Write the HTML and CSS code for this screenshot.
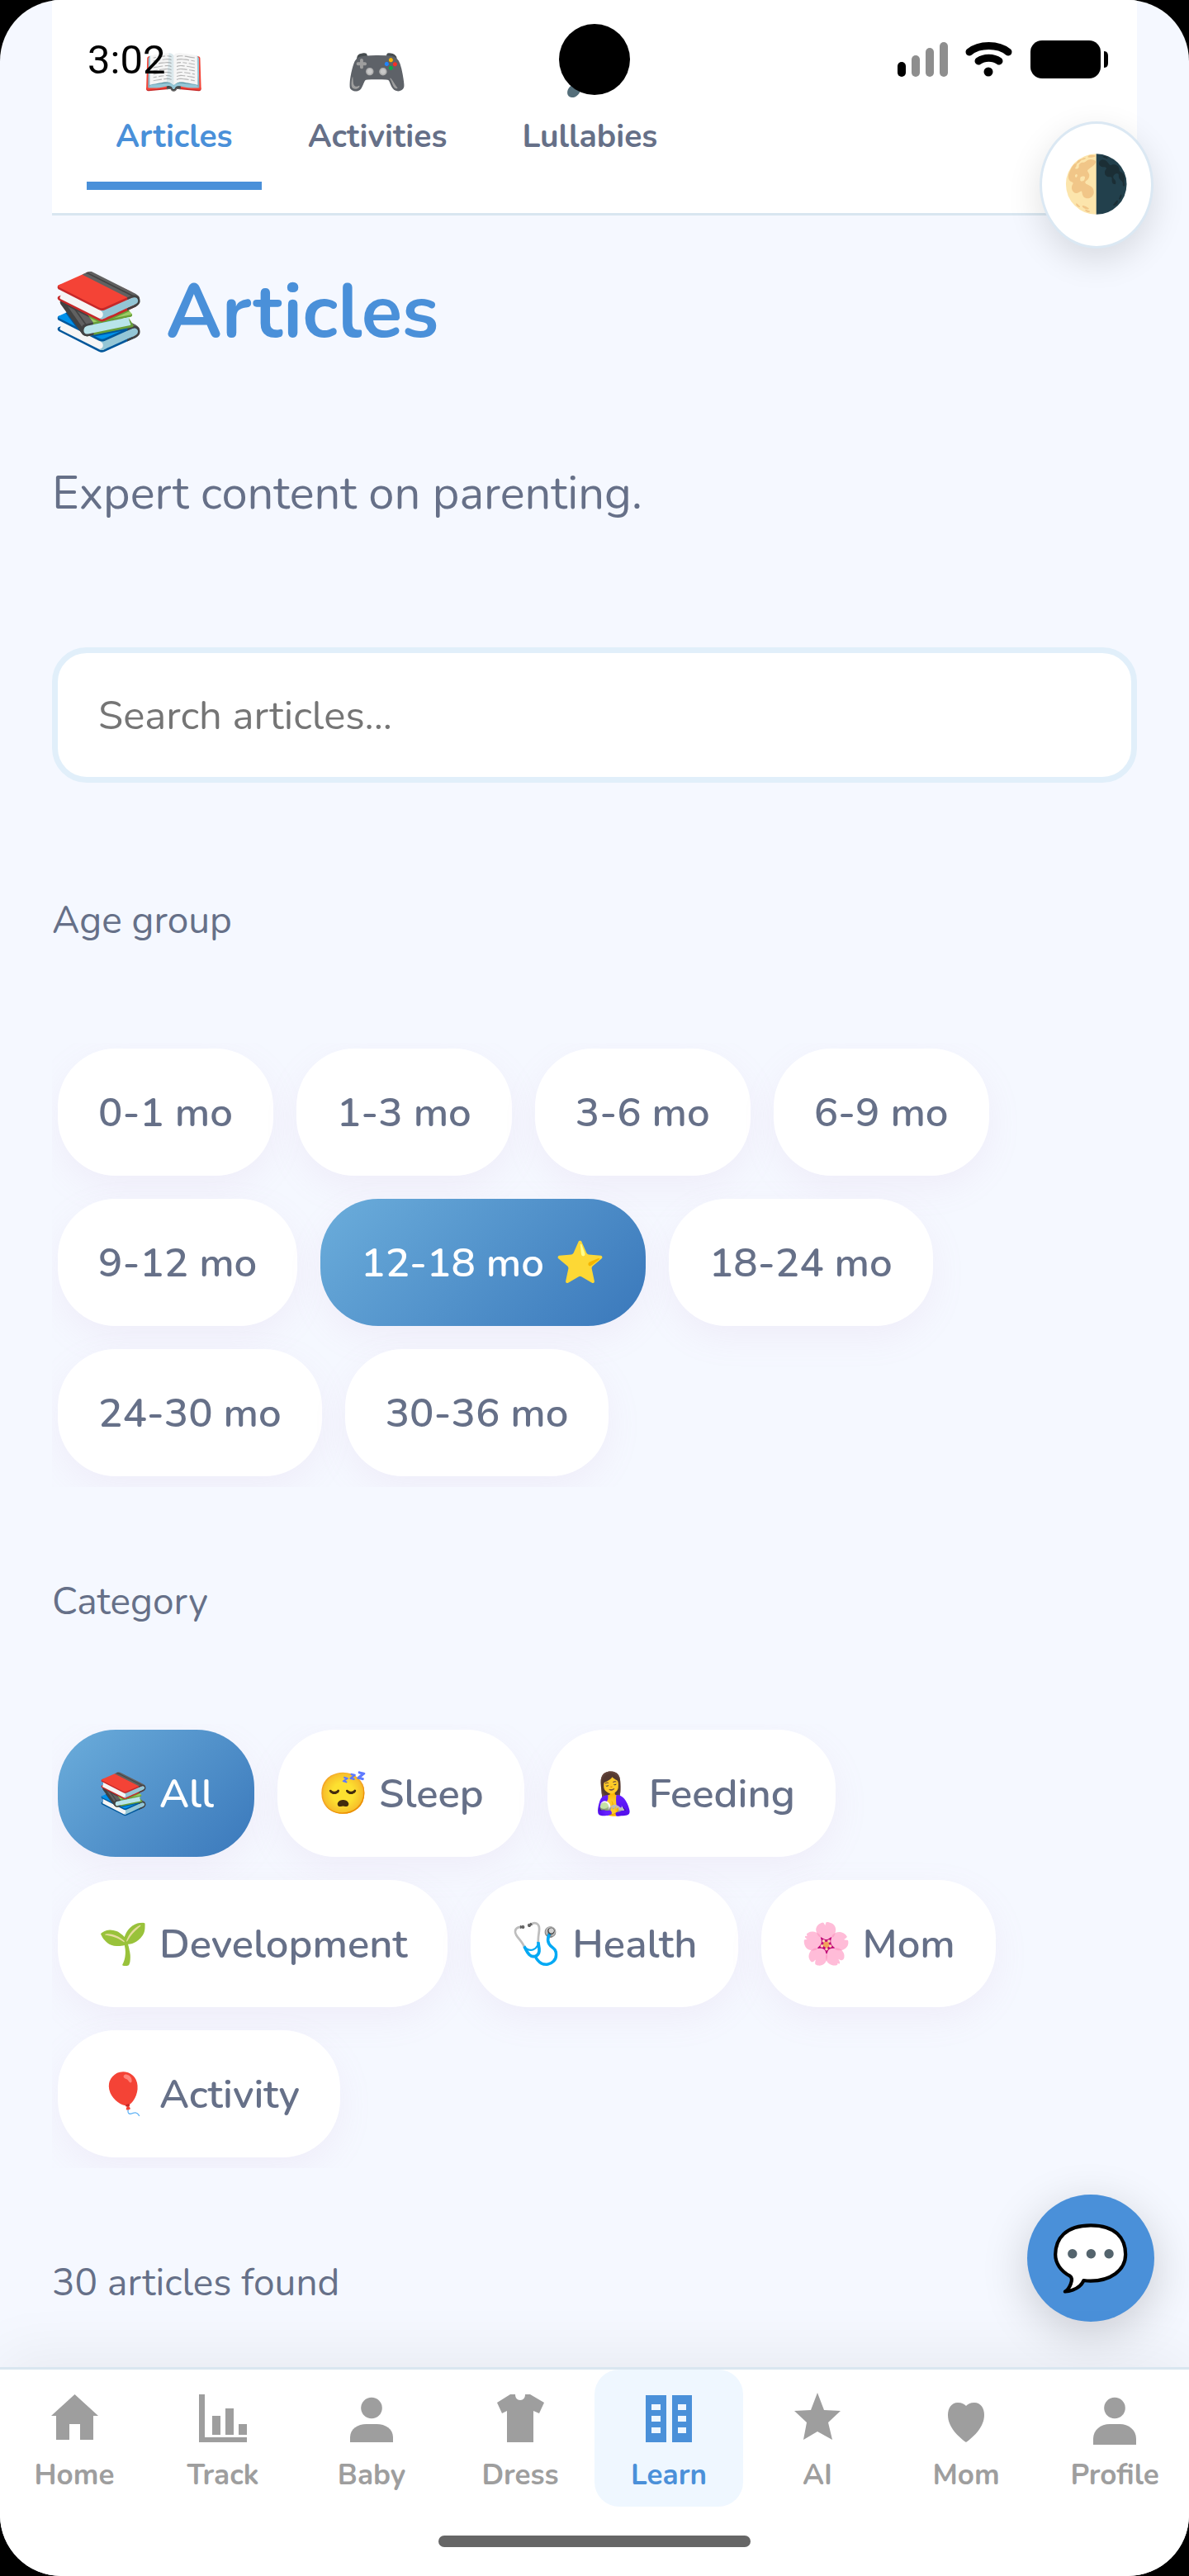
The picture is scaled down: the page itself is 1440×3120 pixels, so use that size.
FILE: index.html
```html
<!DOCTYPE html>
<html lang="en">
<head>
  <meta charset="UTF-8">
  <meta name="viewport" content="width=device-width, initial-scale=1.0">
  <title>Articles</title>
  <link rel="stylesheet" href="styles.css">
</head>
<body>
  <div class="screen">
    <div class="status-bar">
      <span class="time">3:02</span>
      <span class="camera"></span>
      <svg class="status-icons" width="256" height="46" viewBox="0 0 256 46" aria-hidden="true">
        <rect x="0" y="26" width="10" height="18" rx="5"/>
        <g fill="#8e8e8e">
          <rect x="17" y="18" width="10" height="26" rx="5"/>
          <rect x="34" y="9" width="10" height="35" rx="5"/>
          <rect x="51" y="2" width="10" height="42" rx="5"/>
        </g>
        <g fill="none" stroke="#000" stroke-linecap="round" stroke-width="9">
          <path d="M87 14C99 4 122 4 134 14"/>
          <path d="M98 25C105 20 116 20 123 25"/>
        </g>
        <circle cx="110" cy="38" r="5.5"/>
        <rect x="161" y="0" width="85" height="46" rx="14"/>
        <path d="M250 13c4 0 5 3 5 6v8c0 3-1 6-5 6z"/>
      </svg>
    </div>

    <button class="round-button theme-toggle" aria-label="Toggle theme">🌗</button>

    <main class="content">
      <div class="tabs">
        <button class="tab active"><span class="tab-icon">📖</span>Articles</button>
        <button class="tab"><span class="tab-icon">🎮</span>Activities</button>
        <button class="tab"><span class="tab-icon">🎵</span>Lullabies</button>
      </div>

      <h1>📚 Articles</h1>
      <p class="subtitle">Expert content on parenting.</p>

      <input type="text" class="search" placeholder="Search articles..." aria-label="Search articles">

      <p class="label">Age group</p>
      <div class="chips">
        <button class="chip">0-1 mo</button>
        <button class="chip">1-3 mo</button>
        <button class="chip">3-6 mo</button>
        <button class="chip">6-9 mo</button>
        <button class="chip">9-12 mo</button>
        <button class="chip active">12-18 mo ⭐</button>
        <button class="chip">18-24 mo</button>
        <button class="chip">24-30 mo</button>
        <button class="chip">30-36 mo</button>
      </div>

      <p class="label">Category</p>
      <div class="chips">
        <button class="chip active">📚 All</button>
        <button class="chip">😴 Sleep</button>
        <button class="chip">🤱 Feeding</button>
        <button class="chip">🌱 Development</button>
        <button class="chip">🩺 Health</button>
        <button class="chip">🌸 Mom</button>
        <button class="chip">🎈 Activity</button>
      </div>

      <p class="label">30 articles found</p>
    </main>

    <button class="round-button chat-button" aria-label="Open chat">💬</button>

    <nav class="bottom-nav">
      <div class="nav-items">
        <a href="#home" class="nav-item">
          <svg viewBox="0 0 64 64"><path d="M32.5 4L61 30h-6v29H39V40H26v19H10V30H4z"/></svg>
          Home
        </a>
        <a href="#track" class="nav-item">
          <svg viewBox="0 0 64 64"><path d="M3 4h7v52h51v6H3zM19 30h10v23H19zM35 21h10v32H35zM51 40h10v13H51z"/></svg>
          Track
        </a>
        <a href="#baby" class="nav-item">
          <svg viewBox="0 0 64 64"><circle cx="32" cy="20.5" r="12.8"/><path d="M6 62v-6c0-10 9-16 20-16h12c11 0 20 6 20 16v6z"/></svg>
          Baby
        </a>
        <a href="#dress" class="nav-item">
          <svg viewBox="0 0 64 64"><path d="M20 4h6c0 4 2 7 6 7s6-3 6-7h6l17 10-6 13-7-3v38H16V24l-6 3L4 14z"/></svg>
          Dress
        </a>
        <a href="#learn" class="nav-item active">
          <svg viewBox="0 0 64 64"><path fill-rule="evenodd" d="M4 5h25v57H4zM36 5h24v57H36zM11 16v7h11v-7zM11 30v7h11v-7zM11 44v7h11v-7zM43 16v7h10v-7zM43 30v7h10v-7zM43 44v7h10v-7z"/></svg>
          Learn
        </a>
        <a href="#ai" class="nav-item">
          <svg viewBox="0 0 64 64"><path d="M32 2l8 21 20 1-15 14 5 21-18-10-17 10 4-21L4 24l20-1z"/></svg>
          AI
        </a>
        <a href="#mom" class="nav-item">
          <svg viewBox="0 0 64 64"><path d="M32 62C22 55 10 43 10 29c0-8 4-15 12-15 5 0 8 2 10 4 2-2 5-4 10-4 8 0 12 7 12 15 0 14-12 26-22 33z"/></svg>
          Mom
        </a>
        <a href="#profile" class="nav-item">
          <svg viewBox="0 0 64 64"><circle cx="32" cy="20.5" r="12.8"/><path d="M6 65v-7c0-11 9-18 20-18h12c11 0 20 7 20 18v7z"/></svg>
          Profile
        </a>
      </div>
      <div class="home-indicator"></div>
    </nav>
  </div>
</body>
</html>
```
FILE: styles.css
```css
* {
  box-sizing: border-box;
}

body {
  margin: 0;
  background-color: #000;
  font-family: Nunito, "Open Sans", "Noto Color Emoji", sans-serif;
  color: #667088;
}

button, input {
  font-family: inherit;
}

button {
  border: none;
  padding: 0;
  cursor: pointer;
}

h1, p {
  margin: 0;
}

.screen {
  position: relative;
  display: flex;
  flex-direction: column;
  min-height: 100vh;
  background-color: #f5f8ff;
  border-radius: 74px;
  overflow: hidden;
}

/* status bar lies over the scrolled content */
.status-bar {
  position: absolute;
  top: 0;
  left: 0;
  right: 0;
  z-index: 2;
  display: flex;
  align-items: center;
  justify-content: space-between;
  height: 144px;
  padding: 0 97px 0 106px;
}

.time {
  font-family: Roboto, sans-serif;
  font-size: 49px;
  color: #000;
}

.camera {
  position: absolute;
  top: 29px;
  left: calc(50% - 43px);
  width: 86px;
  height: 86px;
  border-radius: 50%;
  background-color: #000;
}

.content {
  padding: 0 63px 70px;
}

.tabs {
  display: flex;
  gap: 21px;
  padding: 56px 42px 28px;
  background-color: #fff;
  border-bottom: 3px solid #d9e6f0;
}

.tab {
  display: flex;
  flex-direction: column;
  align-items: center;
  gap: 21px;
  padding: 0 35px 29px;
  background: none;
  border-bottom: 10px solid transparent;
  font-size: 39px;
  font-weight: 700;
  line-height: 50px;
  color: #667088;
}

.tab.active {
  color: #4a90d9;
  border-color: #4a90d9;
}

.tab-icon {
  font-size: 60px;
  line-height: 64px;
}

h1 {
  margin-top: 57px;
  font-size: 91px;
  line-height: 120px;
  color: #4a90d9;
}

.subtitle {
  margin-top: 120px;
  font-size: 56px;
  line-height: 80px;
}

.search {
  display: block;
  width: 100%;
  height: 164px;
  margin: 146px 0 135px;
  padding: 0 49px;
  border: 7px solid #e1effa;
  border-radius: 42px;
  background-color: #fff;
  font-size: 49px;
}

.search::placeholder {
  color: #757575;
}

.label {
  margin-top: 107px;
  font-size: 46px;
  line-height: 64px;
}

.chips {
  display: flex;
  flex-wrap: wrap;
  gap: 28px;
  margin-top: 116px;
  padding: 7px 7px 13px;
  overflow: hidden;
}

.chip {
  height: 154px;
  padding: 0 49px;
  border-radius: 70px;
  background-color: #fff;
  box-shadow: 0 14px 42px rgba(200, 150, 200, 0.1);
  font-size: 49px;
  font-weight: 600;
  color: #667088;
}

.chip.active {
  background: linear-gradient(135deg, #6baddb, #3a78bb);
  color: #fff;
}

.round-button {
  position: absolute;
  z-index: 1;
  border-radius: 50%;
  text-align: center;
}

.theme-toggle {
  top: 147px;
  right: 43px;
  width: 138px;
  height: 154px;
  border: 3px solid #dbe8f3;
  background-color: #fff;
  box-shadow: 0 14px 42px rgba(0, 0, 0, 0.12);
  font-size: 67px;
}

.chat-button {
  right: 42px;
  bottom: 308px;
  width: 154px;
  height: 154px;
  background-color: #4a90d9;
  box-shadow: 0 14px 56px rgba(0, 0, 0, 0.18);
  font-size: 77px;
}

.bottom-nav {
  position: relative;
  z-index: 1;
  margin-top: auto;
  padding-bottom: 35px;
  background-color: #fff;
  border-top: 3px solid #d9e6f0;
  box-shadow: 0 -14px 70px rgba(0, 0, 0, 0.06);
}

.nav-items {
  display: grid;
  grid-template-columns: repeat(8, 1fr);
}

.nav-item {
  display: flex;
  flex-direction: column;
  align-items: center;
  gap: 14px;
  height: 166px;
  padding-top: 26px;
  border-radius: 30px;
  font-size: 35px;
  font-weight: 700;
  line-height: 48px;
  color: #9e9e9e;
  text-decoration: none;
}

.nav-item.active {
  background-color: #eff7ff;
  color: #4a90d9;
}

.nav-item svg {
  width: 64px;
  height: 64px;
  fill: currentColor;
  overflow: visible;
}

.home-indicator {
  width: 378px;
  height: 14px;
  margin: 35px auto 0;
  border-radius: 7px;
  background-color: #666;
}
```
